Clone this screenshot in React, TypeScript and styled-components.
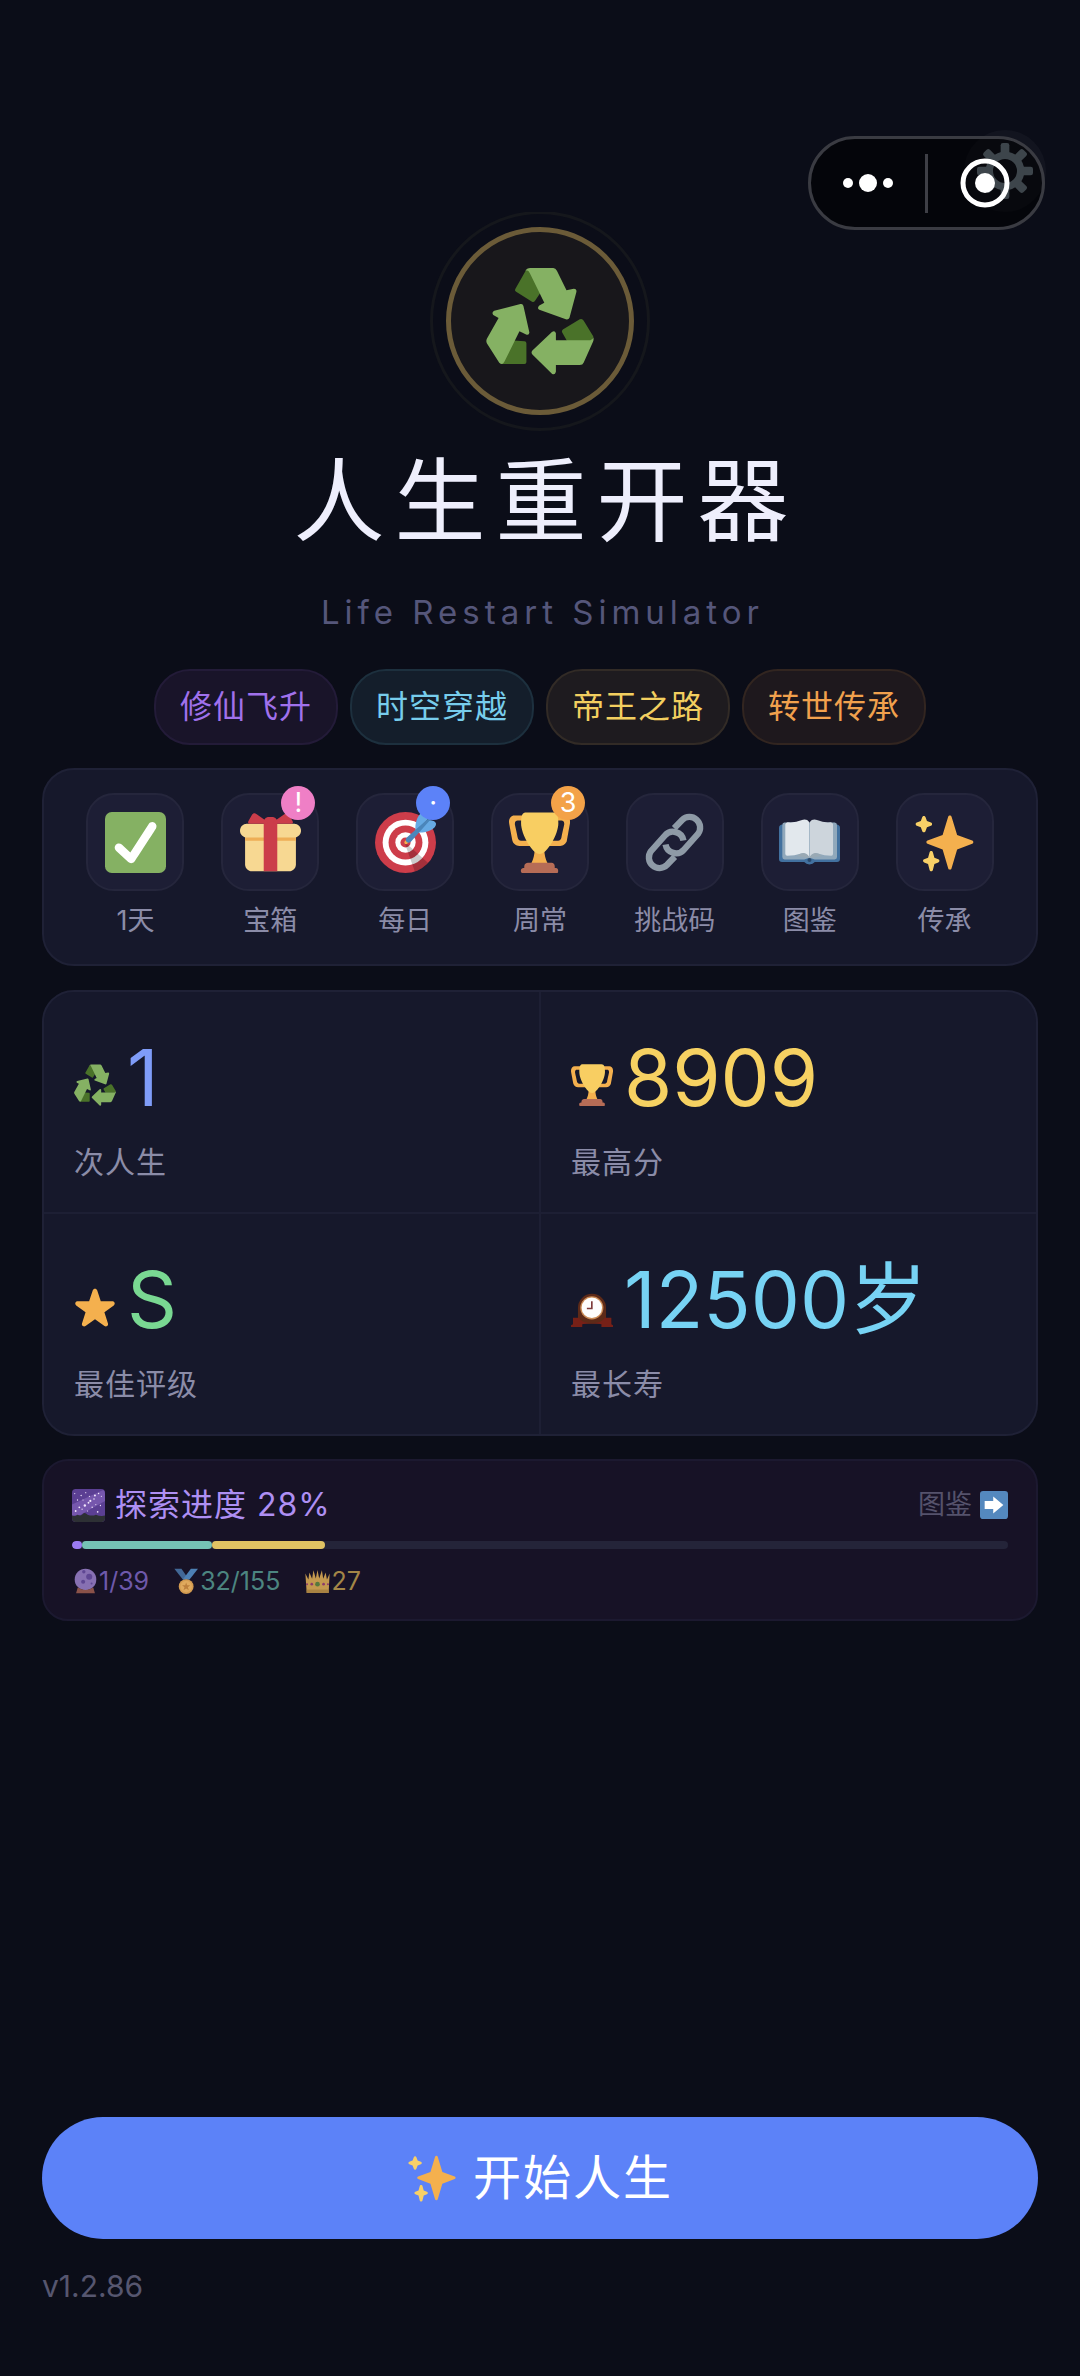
import React from "react";
import styled, { createGlobalStyle } from "styled-components";

const GlobalStyle = createGlobalStyle`
  *, *::before, *::after { box-sizing: border-box; }
  html, body { margin: 0; background: #0b0d18; }
  body {
    font-family: Inter, "Noto Sans CJK SC", sans-serif;
    color: #eeeefc;
  }
  button, a { font: inherit; color: inherit; text-decoration: none; }
  button { margin: 0; padding: 0; border: 0; background: none; cursor: pointer; }
  svg { display: block; flex: none; }
`;

/* ---------- layout ---------- */

const Page = styled.div`
  position: relative;
  min-height: 100vh;
  display: flex;
  flex-direction: column;
  padding: 130px 42px 70px;
`;

const Header = styled.header`
  display: flex;
  justify-content: flex-end;
  margin-right: -8px;
`;

const SettingsButton = styled.button`
  display: flex;
  align-items: center;
  justify-content: center;
  width: 82px;
  height: 82px;
  border-radius: 50%;
  background: rgba(255, 255, 255, 0.03);
`;

const Capsule = styled.div`
  position: absolute;
  top: 136px;
  right: 35px;
  display: flex;
  align-items: center;
  width: 237px;
  height: 94px;
  border: 3px solid #3a3b42;
  border-radius: 47px;
  background: rgba(0, 0, 0, 0.55);
`;

const CapsuleButton = styled.button`
  flex: 1;
  height: 100%;
  display: flex;
  align-items: center;
  justify-content: center;
`;

const CapsuleDivider = styled.span`
  width: 3px;
  height: 59px;
  background: #3e3f46;
`;

const Hero = styled.section`
  display: flex;
  flex-direction: column;
  align-items: center;
  padding-top: 15px;
  overflow: hidden;
`;

const Emblem = styled.div`
  position: relative;
  display: flex;
  align-items: center;
  justify-content: center;
  width: 188px;
  height: 188px;
  border: 5px solid #6b5b38;
  border-radius: 50%;
  background: #18171b;

  &::after {
    content: "";
    position: absolute;
    inset: -21px;
    border: 3px solid #15171c;
    border-radius: 50%;
  }
`;

const Title = styled.h1`
  margin: 31px 0 0;
  padding-left: 12px;
  font-size: 91px;
  font-weight: 400;
  line-height: 110px;
  letter-spacing: 10px;
`;

const Subtitle = styled.p`
  margin: 36px 0 0;
  padding-left: 5px;
  font-size: 33px;
  line-height: 40px;
  letter-spacing: 5px;
  color: #55567a;
`;

const TagList = styled.div`
  display: flex;
  flex-wrap: wrap;
  justify-content: center;
  gap: 12px;
  margin-top: 37px;
`;

const Tag = styled.span<{ $color: string; $bg: string; $line: string }>`
  padding: 0 24px;
  border: 2px solid ${(p) => p.$line};
  border-radius: 36px;
  background: ${(p) => p.$bg};
  color: ${(p) => p.$color};
  font-size: 32px;
  line-height: 72px;
  letter-spacing: 1px;
`;

const Card = styled.section`
  border: 2px solid #1f2136;
  border-radius: 32px;
  background: #16182b;
  overflow: hidden;
`;

const Shortcuts = styled(Card)`
  display: grid;
  grid-template-columns: repeat(7, 1fr);
  margin-top: 23px;
  padding: 23px 24px;
`;

const Shortcut = styled.button`
  display: flex;
  flex-direction: column;
  align-items: center;
  gap: 10px;
  font-size: 27px;
  line-height: 40px;
  color: #8b8ca8;
`;

const ShortcutIcon = styled.span`
  position: relative;
  display: flex;
  align-items: center;
  justify-content: center;
  width: 98px;
  height: 98px;
  border: 2px solid #25263c;
  border-radius: 28px;
  background: #1d1e35;
`;

const Badge = styled.span<{ $color: string }>`
  position: absolute;
  top: -9px;
  right: 2px;
  width: 34px;
  height: 34px;
  border-radius: 50%;
  background: ${(p) => p.$color};
  color: #ffffff;
  font-size: 27px;
  line-height: 34px;
  text-align: center;
`;

const Stats = styled(Card)`
  display: grid;
  grid-template-columns: 1fr 1fr;
  gap: 2px;
  margin-top: 24px;
  background: #1d1f34;
`;

const Stat = styled.div`
  padding: 34px 30px 30px;
  background: #16182b;
`;

const StatValue = styled.div<{ $color: string }>`
  display: flex;
  align-items: baseline;
  gap: 11px;
  font-size: 78px;
  line-height: 104px;
  color: ${(p) => p.$color};
`;

const StatLabel = styled.div`
  margin-top: 12px;
  font-size: 30px;
  line-height: 40px;
  letter-spacing: 1px;
  color: #8b8ca8;
`;

const Explore = styled(Card)`
  margin-top: 23px;
  padding: 24px 28px 18px;
  border-color: #1c1930;
  border-radius: 26px;
  background: #171226;
`;

const ExploreHead = styled.div`
  display: flex;
  align-items: center;
  justify-content: space-between;
  line-height: 40px;
`;

const ExploreTitle = styled.h2`
  display: flex;
  align-items: center;
  gap: 10px;
  margin: 0;
  font-size: 32px;
  font-weight: 400;
  letter-spacing: 1px;
  color: #ae8ff3;
`;

const ExploreLink = styled.a`
  display: flex;
  align-items: center;
  gap: 8px;
  font-size: 27px;
  color: #55526c;
`;

const Track = styled.div`
  display: flex;
  height: 8px;
  margin-top: 16px;
  border-radius: 4px;
  background: #242439;
  overflow: hidden;
`;

const Segment = styled.span<{ $color: string }>`
  border-radius: 4px;
  background: ${(p) => p.$color};
`;

const Legend = styled.div`
  display: flex;
  gap: 24px;
  margin-top: 12px;
`;

const LegendItem = styled.span<{ $color: string }>`
  display: flex;
  align-items: center;
  font-size: 25px;
  line-height: 40px;
  color: ${(p) => p.$color};
`;

const Footer = styled.footer`
  display: flex;
  flex-direction: column;
  margin-top: auto;
  padding-top: 40px;
`;

const StartButton = styled.button`
  display: flex;
  align-items: center;
  justify-content: center;
  gap: 16px;
  height: 122px;
  border-radius: 61px;
  background: #5c82f8;
  color: #ffffff;
  font-size: 48px;
  line-height: 64px;
  letter-spacing: 2px;
`;

const Version = styled.span`
  margin-top: 27px;
  font-size: 30px;
  line-height: 40px;
  color: #56566f;
`;

/* ---------- icons ---------- */

type IconProps = { size: number };

const Gear = ({ size }: IconProps) => (
  <svg width={size} height={size} viewBox="-84 -84 168 168" fill="#8899a6" aria-hidden="true">
    {[0, 45, 90, 135, 180, 225, 270, 315].map((a) => (
      <rect key={a} x="-13" y="-84" width="26" height="36" rx="7" transform={`rotate(${a})`} />
    ))}
    <circle r="47" fill="none" stroke="#8899a6" strokeWidth="22" />
  </svg>
);

const Recycle = ({ size }: IconProps) => (
  <svg width={size} height={size} viewBox="225 198 326 326" aria-hidden="true">
    <g fill="#4a7229">
      <path d="M346 207L313 265Q311 270 316 273L364 303Q369 306 373 300L392 272L372 215Z" />
      <path d="M457 387Q452 391 455 396L470 422H545L549 408L520 360Q515 352 508 356Z" />
      <path d="M272 491H341Q347 491 347 485V428Q347 422 341 422L308 420Z" />
    </g>
    <g fill="#85b163">
      <path d="M345 207Q350 201 358 201H428Q435 201 439 209L468 268L490 264Q499 264 498 273L477 351Q474 358 466 356L386 327Q378 322 386 314L401 306L357 216Q353 207 345 209Z" />
      <path d="M549 410Q551 416 548 424L520 486Q517 494 508 494H436V514Q433 525 424 520L365 462Q360 456 365 450L424 394Q433 388 436 398V419H540Q547 418 549 410Z" />
      <path d="M228 414L263 352L247 343Q241 334 250 330L329 310Q336 308 338 316L356 396Q355 405 346 402L326 392L280 485Q274 495 265 487L228 429Q224 421 228 414Z" />
    </g>
  </svg>
);

const Check = ({ size }: IconProps) => (
  <svg width={size} height={size} viewBox="0 0 36 36" aria-hidden="true">
    <rect width="36" height="36" rx="4" fill="#85b163" />
    <path
      fill="#fff"
      d="M29.28 6.362c-1.156-.751-2.704-.422-3.458.736L14.936 23.877l-5.029-4.65c-1.014-.938-2.596-.875-3.533.138-.937 1.014-.875 2.596.139 3.533l7.209 6.666c.48.445 1.09.665 1.696.665.673 0 1.534-.282 2.099-1.139.332-.506 12.5-19.27 12.5-19.27.751-1.159.421-2.707-.737-3.458z"
    />
  </svg>
);

const Gift = ({ size }: IconProps) => (
  <svg width={size} height={size} viewBox="0 0 36 36" aria-hidden="true">
    <path fill="#f7d892" d="M33 31c0 2.2-1.8 4-4 4H7c-2.2 0-4-1.8-4-4V14c0-2.2 1.8-4 4-4h22c2.2 0 4 1.8 4 4v17z" />
    <path fill="#f7d892" d="M36 11c0 2.2-1.8 4-4 4H4c-2.2 0-4-1.8-4-4s1.8-4 4-4h28c2.2 0 4 1.8 4 4z" />
    <path fill="#eeae56" d="M3 15h30v2H3z" />
    <path fill="#cb3d4a" d="M19 3h-2c-1.657 0-3 1.343-3 3v29h8V6c0-1.657-1.343-3-3-3z" />
    <path
      fill="#cb3d4a"
      d="M16 7c1.1 0 1.263-.516.361-1.147L9.639 1.147c-.902-.631-2.085-.366-2.631.589L4.992 5.264C4.446 6.219 4.9 7 6 7h10zm4 0c-1.1 0-1.263-.516-.361-1.147l6.723-4.706c.901-.631 2.085-.366 2.631.589l2.016 3.527C31.554 6.219 31.1 7 30 7H20z"
    />
  </svg>
);

const Target = ({ size }: IconProps) => (
  <svg width={size} height={size} viewBox="0 0 36 36" aria-hidden="true">
    <circle cx="18" cy="18" r="18" fill="#cd3d4a" />
    <circle cx="18" cy="18" r="13.5" fill="#fff" />
    <circle cx="18" cy="18" r="10" fill="#cd3d4a" />
    <circle cx="18" cy="18" r="6" fill="#fff" />
    <circle cx="18" cy="18" r="3" fill="#cd3d4a" />
    <path opacity=".2" d="M18.24 18.282l13.144 11.754s-2.647 3.376-7.89 5.109L17.579 18.42l.661-.138z" />
    <path
      fill="#f4b04e"
      d="M18.294 19c-.255 0-.509-.097-.704-.292-.389-.389-.389-1.018 0-1.407l.563-.563c.389-.389 1.018-.389 1.408 0 .388.389.388 1.018 0 1.407l-.564.563c-.194.195-.448.292-.703.292z"
    />
    <path
      fill="#66aae4"
      d="M24.016 6.981c-.403 2.079 0 4.691 0 4.691l7.054-7.388c.291-1.454-.528-3.932-1.718-4.238-1.19-.306-4.079.803-5.336 6.935zm5.003 5.003c-2.079.403-4.691 0-4.691 0l7.388-7.054c1.454-.291 3.932.528 4.238 1.718.306 1.19-.803 4.079-6.935 5.336z"
    />
    <path
      fill="#4a86bb"
      d="M32.798 4.485L21.176 17.587c-.362.362-1.673.882-2.51.046-.836-.836-.419-2.08-.057-2.443L31.815 3.501s.676-.635 1.159-.152-.176 1.136-.176 1.136z"
    />
  </svg>
);

const Trophy = ({ size }: IconProps) => (
  <svg width={size} height={size} viewBox="0 0 36 36" aria-hidden="true">
    <path
      fill="#f4b04e"
      d="M5.123 5h6C12.227 5 13 4.896 13 6V4c0-1.104-.773-2-1.877-2h-8c-2 0-3.583 2.125-3 5 0 0 1.791 9.375 1.917 9.958C2.373 18.5 4.164 20 6.081 20h6.958c1.105 0-.039-1.896-.039-3v-2c0 1.104-.773 2-1.877 2h-4c-1.104 0-1.833-1.042-2-2S3.539 7.667 3.539 7.667C3.206 5.75 4.018 5 5.123 5zm25.812 0h-6C23.831 5 22 4.896 22 6V4c0-1.104 1.831-2 2.935-2h8c2 0 3.584 2.125 3 5 0 0-1.633 9.419-1.771 10-.354 1.5-2.042 3-4 3h-7.146C21.914 20 22 18.104 22 17v-2c0 1.104 1.831 2 2.935 2h4c1.104 0 1.834-1.042 2-2s1.584-7.333 1.584-7.333C32.851 5.75 32.04 5 30.935 5zM20.832 22c0-6.958-2.709 0-2.709 0s-3-6.958-3 0-3.291 10-3.291 10h12.292c-.001 0-3.292-3.042-3.292-10z"
    />
    <path
      fill="#f8ce62"
      d="M29.123 6.577c0 6.775-6.77 18.192-11 18.192-4.231 0-11-11.417-11-18.192 0-5.195 1-6.319 3-6.319 1.374 0 6.025-.027 8-.027l7-.001c2.917-.001 4 .684 4 6.347z"
    />
    <path
      fill="#b66c56"
      d="M27 33c0 1.104.227 2-.877 2h-16C9.018 35 9 34.104 9 33v-1c0-1.104 1.164-2 2.206-2h13.917c1.042 0 1.877.896 1.877 2v1z"
    />
    <path
      fill="#b66c56"
      d="M29 34.625c0 .76.165 1.375-1.252 1.375H8.498C7.206 36 7 35.385 7 34.625v-.25C7 33.615 7.738 33 8.498 33h19.25c.759 0 1.252.615 1.252 1.375v.25z"
    />
  </svg>
);

const Chain = ({ size }: IconProps) => (
  <svg width={size} height={size} viewBox="313 154 184 184" fill="none" stroke="#8e9aa6" strokeWidth="19" aria-hidden="true">
    <path d="M404 203L428 178A32 32 0 0 1 476 220L434 267A32 32 0 0 1 378 252" />
    <path d="M406 289L382 314A32 32 0 0 1 334 272L376 225A32 32 0 0 1 432 240" />
  </svg>
);

const Book = ({ size }: IconProps) => (
  <svg width={size} height={size} viewBox="718 154 184 184" aria-hidden="true">
    <path fill="#42719f" d="M727 192H893Q902 194 902 202V296Q902 305 893 305H826Q820 312 810 312Q800 312 794 305H727Q718 305 718 296V202Q718 194 727 192Z" />
    <path fill="#90a8bb" d="M734 186H886Q893 187 893 194V290Q893 297 886 297H826L810 292L794 297H735Q728 297 728 290V194Q728 187 734 186Z" />
    <path fill="#e2e8ed" d="M737 191Q738 186 744 185Q768 187 785 179Q801 173 809 184V291Q798 277 785 279Q765 286 743 286Q737 286 737 280Z" />
    <path fill="#cdd5dc" d="M881 191Q880 186 874 185Q852 187 835 179Q819 173 811 184V291Q822 277 835 279Q855 286 876 286Q881 286 881 280Z" />
    <path fill="#99a9b4" d="M772 287Q795 268 809 289V294Q790 290 772 287ZM848 287Q825 268 811 289V294Q830 290 848 287Z" />
    <circle cx="810" cy="299" r="6" fill="#2b4a6c" />
  </svg>
);

const Sparkles = ({ size }: IconProps) => (
  <svg width={size} height={size} viewBox="0 0 36 36" aria-hidden="true">
    <path
      fill="#f4b04e"
      d="M34.347 16.893l-8.899-3.294-3.323-10.891c-.128-.42-.517-.708-.956-.708-.439 0-.828.288-.956.708l-3.322 10.891-8.9 3.294c-.393.146-.653.519-.653.938 0 .418.26.793.653.938l8.895 3.293 3.324 11.223c.126.424.516.715.959.715.442 0 .833-.291.959-.716l3.324-11.223 8.896-3.293c.391-.144.652-.518.652-.937 0-.418-.261-.792-.653-.938z"
    />
    <path
      fill="#f8d067"
      d="M14.347 27.894l-2.314-.856-.9-3.3c-.118-.436-.513-.738-.964-.738-.451 0-.846.302-.965.737l-.9 3.3-2.313.856c-.393.146-.653.52-.653.938 0 .418.26.793.653.938l2.301.853.907 3.622c.112.444.511.756.97.756.459 0 .858-.312.97-.757l.907-3.622 2.301-.853c.393-.144.653-.519.653-.937 0-.418-.26-.793-.653-.937zM10.009 6.231l-2.364-.875-.876-2.365c-.145-.393-.519-.653-.938-.653-.418 0-.792.26-.938.653l-.875 2.365-2.365.875c-.393.146-.653.52-.653.938 0 .418.26.793.653.938l2.365.875.875 2.365c.146.393.52.653.938.653.418 0 .792-.26.938-.653l.875-2.365 2.365-.875c.393-.146.653-.52.653-.938 0-.418-.26-.792-.653-.938z"
    />
  </svg>
);

const Star = ({ size }: IconProps) => (
  <svg width={size} height={size} viewBox="0 0 36 36" aria-hidden="true">
    <path
      fill="#f4b04e"
      d="M27.287 34.627c-.404 0-.806-.124-1.152-.371L18 28.422l-8.135 5.834c-.343.247-.746.371-1.147.371-.405 0-.81-.126-1.154-.379-.687-.507-.974-1.396-.716-2.211l3.062-9.617L1.886 16.63c-.685-.507-.973-1.396-.712-2.208.261-.812 1.014-1.362 1.866-1.368l9.904-.014 3.16-9.372c.269-.808 1.027-1.354 1.88-1.354s1.61.546 1.881 1.354l3.097 9.373 9.967.014c.853.006 1.606.556 1.867 1.368.26.812-.027 1.701-.712 2.208l-8.024 5.79 3.062 9.617c.259.815-.028 1.704-.715 2.211-.344.252-.748.378-1.12.378z"
    />
  </svg>
);

const Clock = ({ size }: IconProps) => (
  <svg width={size} height={size} viewBox="128 926 127 127" aria-hidden="true">
    <path fill="#5d2a18" d="M149 1024V992A42 42 0 0 1 234 992V1024L240 1040H142Z" />
    <path fill="#762017" d="M134 1022H152Q160 1038 191 1038Q222 1038 230 1022H250V1042L255 1045V1050H220V1042Q191 1036 162 1042V1050H128V1045L134 1042Z" />
    <circle cx="191" cy="992" r="35" fill="#c98a55" />
    <circle cx="191" cy="992" r="31" fill="#fdfdfd" />
    <path d="M191 972V994H176" fill="none" stroke="#7e3b3b" strokeWidth="5" />
  </svg>
);

const STARS = [
  [4, 24, 1], [8, 20, 1], [11, 22, 0.7], [14, 18, 1.3], [18, 15, 1], [20, 13, 1.2], [24, 11, 0.8],
  [25, 7, 1.1], [29, 5, 0.8], [32, 8, 0.6], [10, 7, 0.8], [6, 12, 0.7], [15, 4, 0.6], [22, 20, 0.8],
  [28, 25, 0.9], [31, 18, 0.7], [12, 12, 0.6], [19, 8, 0.7], [3, 5, 0.6], [26, 17, 0.6], [17, 24, 0.6],
];

const MilkyWay = ({ size }: IconProps) => (
  <svg width={size} height={size} viewBox="0 0 36 36" aria-hidden="true">
    <rect width="36" height="36" rx="4" fill="#5b3f93" />
    <path fill="#8263b8" d="M0 17L34 1Q36 2 36 5V13L8 29H0Z" opacity=".7" />
    {STARS.map(([x, y, r]) => (
      <circle key={`${x}-${y}`} cx={x} cy={y} r={r} fill="#f1e6fb" />
    ))}
    <path fill="#2d3034" d="M0 29Q3 30 6 28Q10 30 12 27Q14 25 17 28Q22 30 26 28Q31 30 36 29V32Q36 36 32 36H4Q0 36 0 32Z" />
  </svg>
);

const ArrowRight = ({ size }: IconProps) => (
  <svg width={size} height={size} viewBox="0 0 36 36" aria-hidden="true">
    <rect width="36" height="36" rx="4" fill="#5488be" />
    <path fill="#fff" d="M6 13H17V7L30 18L17 29V23H6Z" />
  </svg>
);

const CrystalBall = ({ size }: IconProps) => (
  <svg width={size} height={size} viewBox="124 384 80 80" aria-hidden="true">
    <circle cx="164" cy="418" r="32" fill="#8770b2" />
    <g fill="#5f4793">
      <circle cx="175" cy="410" r="9" />
      <circle cx="157" cy="425" r="6" />
      <circle cx="159" cy="395" r="5" />
      <circle cx="182" cy="430" r="3" />
    </g>
    <path fill="#8a5249" d="M141 442Q164 456 187 442L192 459H136Z" />
  </svg>
);

const Medal = ({ size }: IconProps) => (
  <svg width={size} height={size} viewBox="427 382 80 80" aria-hidden="true">
    <path fill="#426896" d="M431 384H452L474 416H456Z" />
    <path fill="#4d80b4" d="M501 384H480L456 416H476Z" />
    <circle cx="466" cy="437" r="22" fill="#d39b50" />
    <circle cx="466" cy="437" r="17" fill="#dfa95d" />
    <path fill="#bd803d" d="M466 425L469 433H478L471 439L474 448L466 443L458 448L461 439L454 433H463Z" />
  </svg>
);

const Crown = ({ size }: IconProps) => (
  <svg width={size} height={size} viewBox="817 382 80 80" aria-hidden="true">
    <path
      fill="#c4994f"
      d="M825 456L821 398L830 416L833 395L841 414L845 389L852 413L857 388L862 413L870 389L874 414L881 395L885 416L893 398L890 456Z"
    />
    <path fill="#a88242" d="M825 446H890V456H825Z" />
    <circle cx="857" cy="430" r="7" fill="#57793d" />
    <circle cx="840" cy="430" r="4" fill="#8c3a6b" />
    <circle cx="875" cy="430" r="4" fill="#8c3a6b" />
    <circle cx="826" cy="430" r="3" fill="#8c3a6b" />
    <circle cx="888" cy="430" r="3" fill="#8c3a6b" />
  </svg>
);

/* ---------- data ---------- */

const tags = [
  { text: "修仙飞升", color: "#a071ec", bg: "#191429", line: "#231b38" },
  { text: "时空穿越", color: "#77cdec", bg: "#141e2b", line: "#1d303e" },
  { text: "帝王之路", color: "#f2cf5f", bg: "#1e1b1f", line: "#322b26" },
  { text: "转世传承", color: "#f1a14d", bg: "#1e181d", line: "#322520" },
];

const shortcuts = [
  { label: "1天", Icon: Check },
  { label: "宝箱", Icon: Gift, badge: "!", badgeColor: "#ef7fc6" },
  { label: "每日", Icon: Target, badge: "·", badgeColor: "#5c82f8" },
  { label: "周常", Icon: Trophy, badge: "3", badgeColor: "#f3a248" },
  { label: "挑战码", Icon: Chain },
  { label: "图鉴", Icon: Book },
  { label: "传承", Icon: Sparkles },
];

const stats = [
  { value: "1", label: "次人生", Icon: Recycle, color: "#7f9cf8" },
  { value: "8909", label: "最高分", Icon: Trophy, color: "#f6d162" },
  { value: "S", label: "最佳评级", Icon: Star, color: "#79d892" },
  { value: "12500岁", label: "最长寿", Icon: Clock, color: "#77d3f4" },
];

const progress = [
  { text: "1/39", share: 1.1, Icon: CrystalBall, bar: "#9b7bf2", color: "#6e59aa" },
  { text: "32/155", share: 13.9, Icon: Medal, bar: "#75c3b5", color: "#4c8580" },
  { text: "27", share: 12, Icon: Crown, bar: "#e0c363", color: "#a38647" },
];

export default function App() {
  return (
    <>
      <GlobalStyle />
      <Page>
        <Header>
          <SettingsButton aria-label="设置">
            <Gear size={56} />
          </SettingsButton>
        </Header>

        <Hero>
          <Emblem>
            <Recycle size={108} />
          </Emblem>
          <Title>人生重开器</Title>
          <Subtitle>Life Restart Simulator</Subtitle>
        </Hero>

        <TagList>
          {tags.map((t) => (
            <Tag key={t.text} $color={t.color} $bg={t.bg} $line={t.line}>
              {t.text}
            </Tag>
          ))}
        </TagList>

        <Shortcuts>
          {shortcuts.map(({ label, Icon, badge, badgeColor }) => (
            <Shortcut key={label}>
              <ShortcutIcon>
                <Icon size={61} />
                {badge && <Badge $color={badgeColor!}>{badge}</Badge>}
              </ShortcutIcon>
              {label}
            </Shortcut>
          ))}
        </Shortcuts>

        <Stats>
          {stats.map(({ value, label, Icon, color }) => (
            <Stat key={label}>
              <StatValue $color={color}>
                <Icon size={42} />
                {value}
              </StatValue>
              <StatLabel>{label}</StatLabel>
            </Stat>
          ))}
        </Stats>

        <Explore>
          <ExploreHead>
            <ExploreTitle>
              <MilkyWay size={33} />
              探索进度 28%
            </ExploreTitle>
            <ExploreLink href="#">
              图鉴
              <ArrowRight size={28} />
            </ExploreLink>
          </ExploreHead>
          <Track role="progressbar" aria-label="探索进度" aria-valuenow={28} aria-valuemin={0} aria-valuemax={100}>
            {progress.map((p) => (
              <Segment key={p.text} $color={p.bar} style={{ width: `${p.share}%` }} />
            ))}
          </Track>
          <Legend>
            {progress.map(({ text, Icon, color }) => (
              <LegendItem key={text} $color={color}>
                <Icon size={27} />
                {text}
              </LegendItem>
            ))}
          </Legend>
        </Explore>

        <Footer>
          <StartButton>
            <Sparkles size={50} />
            开始人生
          </StartButton>
          <Version>v1.2.86</Version>
        </Footer>

        <Capsule>
          <CapsuleButton aria-label="更多">
            <svg width="52" height="20" viewBox="0 0 52 20" fill="#fff" aria-hidden="true">
              <circle cx="6" cy="10" r="5" />
              <circle cx="26" cy="10" r="9" />
              <circle cx="46" cy="10" r="5" />
            </svg>
          </CapsuleButton>
          <CapsuleDivider />
          <CapsuleButton aria-label="关闭">
            <svg width="50" height="50" viewBox="0 0 50 50" aria-hidden="true">
              <circle cx="25" cy="25" r="22" fill="none" stroke="#fff" strokeWidth="5" />
              <circle cx="25" cy="25" r="10" fill="#fff" />
            </svg>
          </CapsuleButton>
        </Capsule>
      </Page>
    </>
  );
}
